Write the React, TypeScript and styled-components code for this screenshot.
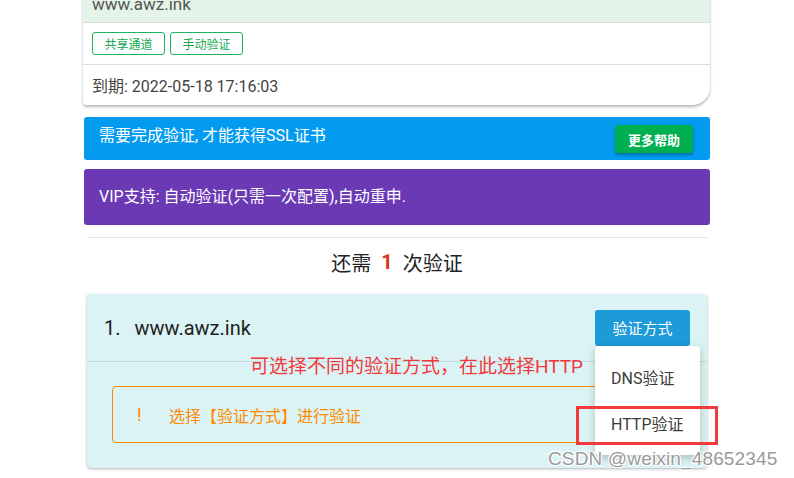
import React from "react";
import styled, { createGlobalStyle } from "styled-components";

const GlobalStyle = createGlobalStyle`
  html, body {
    margin: 0;
    padding: 0;
    background: #fff;
    overflow: hidden;
  }
  body {
    font-family: Roboto, "Noto Sans CJK SC", sans-serif;
    color: #333;
  }
`;

const Page = styled.div`
  position: relative;
  width: 794px;
  height: 478px;
  overflow: hidden;
`;

const Column = styled.div`
  width: 626px;
  margin: 0 auto;
  display: flex;
  flex-direction: column;
`;

const CertCard = styled.div`
  margin-top: -18px;
  margin-left: -1px;
  background: #fff;
  border-radius: 0 0 18px 4px;
  box-shadow: 0 2px 3px rgba(0, 0, 0, 0.28);
`;

const CertHeader = styled.div`
  height: 41px;
  box-sizing: border-box;
  background: #e4f4e9;
  border-bottom: 1px solid #dcdcdc;
  display: flex;
  align-items: center;
  padding: 4px 0 0 9px;
  font-size: 17px;
  color: #555;
`;

const TagRow = styled.div`
  height: 41px;
  display: flex;
  align-items: center;
  gap: 5px;
  padding-left: 9px;
  border-bottom: 1px solid #dcdcdc;
`;

const Tag = styled.span`
  box-sizing: border-box;
  width: 73px;
  height: 23px;
  border: 1px solid #1cb35c;
  border-radius: 3px;
  color: #14a94f;
  font-size: 12px;
  display: flex;
  align-items: center;
  justify-content: center;
`;

const Expiry = styled.div`
  height: 40px;
  display: flex;
  align-items: center;
  padding-left: 9px;
  font-size: 16px;
  color: #444;
`;

const Alert = styled.div<{ $bg: string; $h: number }>`
  margin-top: ${(p) => (p.$bg === "blue" ? 12 : 9)}px;
  height: ${(p) => p.$h}px;
  box-sizing: border-box;
  background: ${(p) => (p.$bg === "blue" ? "#039bf0" : "#6c39b5")};
  border-radius: 3px;
  color: #fff;
  font-size: 16px;
  display: flex;
  align-items: ${(p) => (p.$bg === "blue" ? "flex-start" : "center")};
  justify-content: space-between;
  padding: ${(p) => (p.$bg === "blue" ? "8px 17px 0 15px" : "0 15px")};
`;

const AlertText = styled.span`
  line-height: 22px;
`;

const HelpButton = styled.button`
  width: 78px;
  height: 28px;
  border: none;
  border-radius: 3px;
  background: #00b050;
  color: #fff;
  font-family: inherit;
  font-size: 13px;
  font-weight: 700;
  box-shadow: 0 2px 3px rgba(0, 0, 0, 0.3);
`;

const Divider = styled.hr`
  margin: 12px 3px 0;
  border: none;
  border-top: 1px solid #e2e2e2;
  width: 620px;
`;

const Remaining = styled.div`
  height: 56px;
  box-sizing: border-box;
  padding-bottom: 8px;
  display: flex;
  align-items: center;
  justify-content: center;
  font-size: 20px;
  color: #222;
  gap: 10px;
`;

const Count = styled.b`
  color: #d8361a;
  font-size: 20px;
`;

const VerifyCard = styled.div`
  position: relative;
  margin: 0 3px;
  width: 620px;
  background: #dbf3f4;
  border-radius: 4px;
  box-shadow: 0 1px 3px rgba(0, 0, 0, 0.3);
`;

const VerifyHeader = styled.div`
  height: 67px;
  display: flex;
  align-items: center;
  justify-content: space-between;
  padding: 0 17px;
  border-bottom: 1px solid #c6dcdc;
`;

const Domain = styled.div`
  display: flex;
  gap: 14px;
  font-size: 20px;
  color: #1e1e1e;
  margin-top: 1px;
`;

const MethodButton = styled.button`
  width: 95px;
  height: 36px;
  border: none;
  border-radius: 3px;
  background: #1d9ad8;
  color: #fff;
  font-family: inherit;
  font-size: 15px;
`;

const VerifyBody = styled.div`
  padding: 24px 25px 25px;
`;

const Warning = styled.div`
  height: 57px;
  box-sizing: border-box;
  border: 1px solid #ff8a00;
  border-radius: 4px;
  display: flex;
  align-items: center;
  padding-left: 24px;
  color: #ff8a00;
  font-size: 16px;
`;

const Bang = styled.span`
  width: 32px;
  font-size: 18px;
`;

const Annotation = styled.div`
  position: absolute;
  left: 163px;
  top: 57px;
  color: #f2383c;
  font-size: 19px;
  white-space: nowrap;
`;

const Menu = styled.div`
  position: absolute;
  left: 508px;
  top: 52px;
  width: 105px;
  height: 109px;
  background: #fff;
  border-radius: 4px;
  box-shadow: 0 3px 8px rgba(0, 0, 0, 0.22);
  padding-top: 8px;
  box-sizing: border-box;
`;

const MenuItem = styled.div`
  height: 46px;
  display: flex;
  align-items: center;
  padding-left: 16px;
  font-size: 16px;
  color: #3c3c3c;
`;

const Highlight = styled.div`
  position: absolute;
  left: 576px;
  top: 406px;
  width: 142px;
  height: 39px;
  box-sizing: border-box;
  border: 3px solid #f23a3a;
`;

const Watermark = styled.div`
  position: absolute;
  left: 548px;
  top: 448px;
  font-family: "Liberation Sans", Arial, sans-serif;
  font-size: 19px;
  letter-spacing: 0.15px;
  color: #9a9a9a;
  text-shadow: 1px 1px 0 #fff, -1px -1px 0 #fff, 1px -1px 0 #fff, -1px 1px 0 #fff;
`;

export default function App() {
  return (
    <Page>
      <GlobalStyle />
      <Column>
        <CertCard>
          <CertHeader>www.awz.ink</CertHeader>
          <TagRow>
            <Tag>共享通道</Tag>
            <Tag>手动验证</Tag>
          </TagRow>
          <Expiry>到期: 2022-05-18 17:16:03</Expiry>
        </CertCard>

        <Alert $bg="blue" $h={43}>
          <AlertText>需要完成验证, 才能获得SSL证书</AlertText>
          <HelpButton>更多帮助</HelpButton>
        </Alert>
        <Alert $bg="purple" $h={56}>
          <AlertText>VIP支持: 自动验证(只需一次配置),自动重申.</AlertText>
        </Alert>

        <Divider />
        <Remaining>
          <span>还需</span>
          <Count>1</Count>
          <span>次验证</span>
        </Remaining>

        <VerifyCard>
          <VerifyHeader>
            <Domain>
              <span>1.</span>
              <span>www.awz.ink</span>
            </Domain>
            <MethodButton>验证方式</MethodButton>
          </VerifyHeader>
          <VerifyBody>
            <Warning>
              <Bang>!</Bang>
              选择【验证方式】进行验证
            </Warning>
          </VerifyBody>
          <Annotation>可选择不同的验证方式，在此选择HTTP</Annotation>
          <Menu>
            <MenuItem>DNS验证</MenuItem>
            <MenuItem>HTTP验证</MenuItem>
          </Menu>
        </VerifyCard>
      </Column>
      <Highlight />
      <Watermark>CSDN @weixin_48652345</Watermark>
    </Page>
  );
}
